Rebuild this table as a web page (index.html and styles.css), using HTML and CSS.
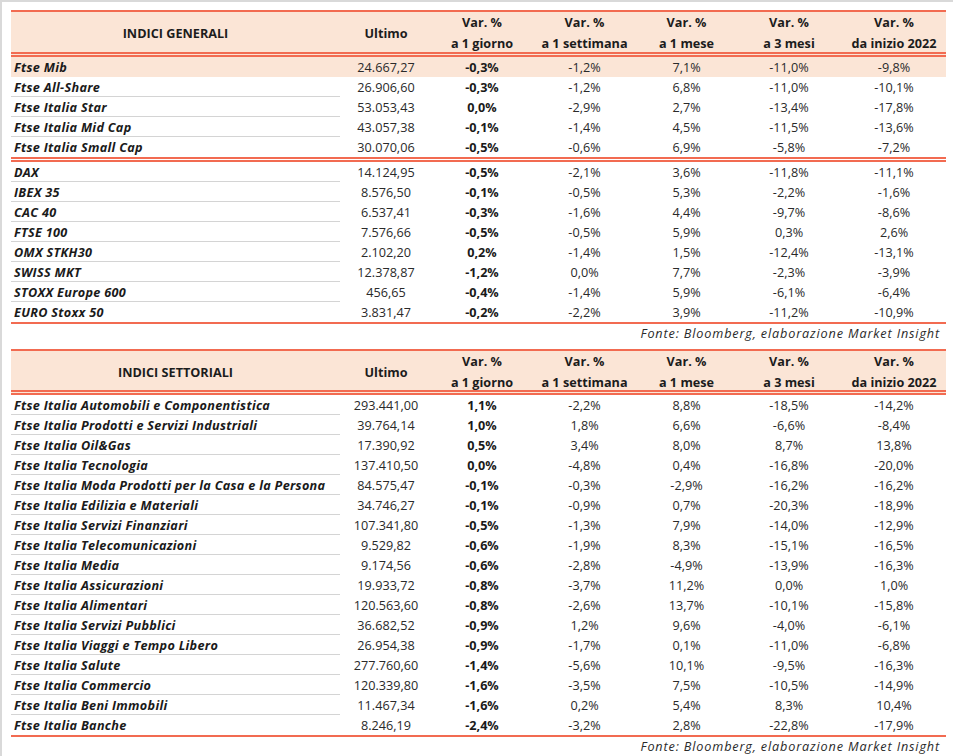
FILE: index.html
```html
<!DOCTYPE html>
<html lang="it">
<head>
<meta charset="utf-8">
<title>Indici</title>
<link rel="stylesheet" href="styles.css">
</head>
<body>
<div class="page">
  <section class="block">
    <div class="sheet">
      <div class="row head">
        <div class="cell title">INDICI GENERALI</div>
        <div class="cell">Ultimo</div>
        <div class="cell stack"><span>Var. %</span><span>a 1 giorno</span></div>
        <div class="cell stack"><span>Var. %</span><span>a 1 settimana</span></div>
        <div class="cell stack"><span>Var. %</span><span>a 1 mese</span></div>
        <div class="cell stack"><span>Var. %</span><span>a 3 mesi</span></div>
        <div class="cell stack"><span>Var. %</span><span>da inizio 2022</span></div>
      </div>
      <div class="row hl"><div class="cell name">Ftse Mib</div><div class="cell">24.667,27</div><div class="cell day">-0,3%</div><div class="cell">-1,2%</div><div class="cell">7,1%</div><div class="cell">-11,0%</div><div class="cell">-9,8%</div></div>
      <div class="row"><div class="cell name">Ftse All-Share</div><div class="cell">26.906,60</div><div class="cell day">-0,3%</div><div class="cell">-1,2%</div><div class="cell">6,8%</div><div class="cell">-11,0%</div><div class="cell">-10,1%</div></div>
      <div class="row"><div class="cell name">Ftse Italia Star</div><div class="cell">53.053,43</div><div class="cell day">0,0%</div><div class="cell">-2,9%</div><div class="cell">2,7%</div><div class="cell">-13,4%</div><div class="cell">-17,8%</div></div>
      <div class="row"><div class="cell name">Ftse Italia Mid Cap</div><div class="cell">43.057,38</div><div class="cell day">-0,1%</div><div class="cell">-1,4%</div><div class="cell">4,5%</div><div class="cell">-11,5%</div><div class="cell">-13,6%</div></div>
      <div class="row group-end"><div class="cell name">Ftse Italia Small Cap</div><div class="cell">30.070,06</div><div class="cell day">-0,5%</div><div class="cell">-0,6%</div><div class="cell">6,9%</div><div class="cell">-5,8%</div><div class="cell">-7,2%</div></div>
      <div class="row"><div class="cell name">DAX</div><div class="cell">14.124,95</div><div class="cell day">-0,5%</div><div class="cell">-2,1%</div><div class="cell">3,6%</div><div class="cell">-11,8%</div><div class="cell">-11,1%</div></div>
      <div class="row"><div class="cell name">IBEX 35</div><div class="cell">8.576,50</div><div class="cell day">-0,1%</div><div class="cell">-0,5%</div><div class="cell">5,3%</div><div class="cell">-2,2%</div><div class="cell">-1,6%</div></div>
      <div class="row"><div class="cell name">CAC 40</div><div class="cell">6.537,41</div><div class="cell day">-0,3%</div><div class="cell">-1,6%</div><div class="cell">4,4%</div><div class="cell">-9,7%</div><div class="cell">-8,6%</div></div>
      <div class="row"><div class="cell name">FTSE 100</div><div class="cell">7.576,66</div><div class="cell day">-0,5%</div><div class="cell">-0,5%</div><div class="cell">5,9%</div><div class="cell">0,3%</div><div class="cell">2,6%</div></div>
      <div class="row"><div class="cell name">OMX STKH30</div><div class="cell">2.102,20</div><div class="cell day">0,2%</div><div class="cell">-1,4%</div><div class="cell">1,5%</div><div class="cell">-12,4%</div><div class="cell">-13,1%</div></div>
      <div class="row"><div class="cell name">SWISS MKT</div><div class="cell">12.378,87</div><div class="cell day">-1,2%</div><div class="cell">0,0%</div><div class="cell">7,7%</div><div class="cell">-2,3%</div><div class="cell">-3,9%</div></div>
      <div class="row"><div class="cell name">STOXX Europe 600</div><div class="cell">456,65</div><div class="cell day">-0,4%</div><div class="cell">-1,4%</div><div class="cell">5,9%</div><div class="cell">-6,1%</div><div class="cell">-6,4%</div></div>
      <div class="row last"><div class="cell name">EURO Stoxx 50</div><div class="cell">3.831,47</div><div class="cell day">-0,2%</div><div class="cell">-2,2%</div><div class="cell">3,9%</div><div class="cell">-11,2%</div><div class="cell">-10,9%</div></div>
    </div>
    <p class="source">Fonte: Bloomberg, elaborazione Market Insight</p>
  </section>

  <section class="block second">
    <div class="sheet">
      <div class="row head">
        <div class="cell title">INDICI SETTORIALI</div>
        <div class="cell">Ultimo</div>
        <div class="cell stack"><span>Var. %</span><span>a 1 giorno</span></div>
        <div class="cell stack"><span>Var. %</span><span>a 1 settimana</span></div>
        <div class="cell stack"><span>Var. %</span><span>a 1 mese</span></div>
        <div class="cell stack"><span>Var. %</span><span>a 3 mesi</span></div>
        <div class="cell stack"><span>Var. %</span><span>da inizio 2022</span></div>
      </div>
      <div class="row"><div class="cell name">Ftse Italia Automobili e Componentistica</div><div class="cell">293.441,00</div><div class="cell day">1,1%</div><div class="cell">-2,2%</div><div class="cell">8,8%</div><div class="cell">-18,5%</div><div class="cell">-14,2%</div></div>
      <div class="row"><div class="cell name">Ftse Italia Prodotti e Servizi Industriali</div><div class="cell">39.764,14</div><div class="cell day">1,0%</div><div class="cell">1,8%</div><div class="cell">6,6%</div><div class="cell">-6,6%</div><div class="cell">-8,4%</div></div>
      <div class="row"><div class="cell name">Ftse Italia Oil&amp;Gas</div><div class="cell">17.390,92</div><div class="cell day">0,5%</div><div class="cell">3,4%</div><div class="cell">8,0%</div><div class="cell">8,7%</div><div class="cell">13,8%</div></div>
      <div class="row"><div class="cell name">Ftse Italia Tecnologia</div><div class="cell">137.410,50</div><div class="cell day">0,0%</div><div class="cell">-4,8%</div><div class="cell">0,4%</div><div class="cell">-16,8%</div><div class="cell">-20,0%</div></div>
      <div class="row"><div class="cell name">Ftse Italia Moda Prodotti per la Casa e la Persona</div><div class="cell">84.575,47</div><div class="cell day">-0,1%</div><div class="cell">-0,3%</div><div class="cell">-2,9%</div><div class="cell">-16,2%</div><div class="cell">-16,2%</div></div>
      <div class="row"><div class="cell name">Ftse Italia Edilizia e Materiali</div><div class="cell">34.746,27</div><div class="cell day">-0,1%</div><div class="cell">-0,9%</div><div class="cell">0,7%</div><div class="cell">-20,3%</div><div class="cell">-18,9%</div></div>
      <div class="row"><div class="cell name">Ftse Italia Servizi Finanziari</div><div class="cell">107.341,80</div><div class="cell day">-0,5%</div><div class="cell">-1,3%</div><div class="cell">7,9%</div><div class="cell">-14,0%</div><div class="cell">-12,9%</div></div>
      <div class="row"><div class="cell name">Ftse Italia Telecomunicazioni</div><div class="cell">9.529,82</div><div class="cell day">-0,6%</div><div class="cell">-1,9%</div><div class="cell">8,3%</div><div class="cell">-15,1%</div><div class="cell">-16,5%</div></div>
      <div class="row"><div class="cell name">Ftse Italia Media</div><div class="cell">9.174,56</div><div class="cell day">-0,6%</div><div class="cell">-2,8%</div><div class="cell">-4,9%</div><div class="cell">-13,9%</div><div class="cell">-16,3%</div></div>
      <div class="row"><div class="cell name">Ftse Italia Assicurazioni</div><div class="cell">19.933,72</div><div class="cell day">-0,8%</div><div class="cell">-3,7%</div><div class="cell">11,2%</div><div class="cell">0,0%</div><div class="cell">1,0%</div></div>
      <div class="row"><div class="cell name">Ftse Italia Alimentari</div><div class="cell">120.563,60</div><div class="cell day">-0,8%</div><div class="cell">-2,6%</div><div class="cell">13,7%</div><div class="cell">-10,1%</div><div class="cell">-15,8%</div></div>
      <div class="row"><div class="cell name">Ftse Italia Servizi Pubblici</div><div class="cell">36.682,52</div><div class="cell day">-0,9%</div><div class="cell">1,2%</div><div class="cell">9,6%</div><div class="cell">-4,0%</div><div class="cell">-6,1%</div></div>
      <div class="row"><div class="cell name">Ftse Italia Viaggi e Tempo Libero</div><div class="cell">26.954,38</div><div class="cell day">-0,9%</div><div class="cell">-1,7%</div><div class="cell">0,1%</div><div class="cell">-11,0%</div><div class="cell">-6,8%</div></div>
      <div class="row"><div class="cell name">Ftse Italia Salute</div><div class="cell">277.760,60</div><div class="cell day">-1,4%</div><div class="cell">-5,6%</div><div class="cell">10,1%</div><div class="cell">-9,5%</div><div class="cell">-16,3%</div></div>
      <div class="row"><div class="cell name">Ftse Italia Commercio</div><div class="cell">120.339,80</div><div class="cell day">-1,6%</div><div class="cell">-3,5%</div><div class="cell">7,5%</div><div class="cell">-10,5%</div><div class="cell">-14,9%</div></div>
      <div class="row"><div class="cell name">Ftse Italia Beni Immobili</div><div class="cell">11.467,34</div><div class="cell day">-1,6%</div><div class="cell">0,2%</div><div class="cell">5,4%</div><div class="cell">8,3%</div><div class="cell">10,4%</div></div>
      <div class="row last"><div class="cell name">Ftse Italia Banche</div><div class="cell">8.246,19</div><div class="cell day">-2,4%</div><div class="cell">-3,2%</div><div class="cell">2,8%</div><div class="cell">-22,8%</div><div class="cell">-17,9%</div></div>
    </div>
    <p class="source">Fonte: Bloomberg, elaborazione Market Insight</p>
  </section>
</div>
</body>
</html>
```
FILE: styles.css
```css
html, body {
  margin: 0;
  padding: 0;
  background: #ffffff;
}

body {
  font-family: "Open Sans", Lato, "DejaVu Sans", sans-serif;
  font-size: 12.67px;
  color: #2a2a2a;
}

.page {
  box-sizing: border-box;
  height: 756px;
  border-top: 2px solid #d9d9d9;
  border-left: 2px solid #d9d9d9;
  padding: 8px 0 0 9px;
}

.block {
  width: 935px;
}

.second {
  margin-top: 5px;
}

.sheet {
  border-top: 2px solid #f26b51;
  border-bottom: 2px solid #f26b51;
}

.row {
  display: grid;
  grid-template-columns: 329px 92px 100px 105px 99px 106px 104px;
  height: 20px;
}

.cell {
  box-sizing: border-box;
  display: flex;
  align-items: center;
  justify-content: center;
  white-space: nowrap;
}

.head {
  height: 40px;
  background: #fbe5d6;
  border-bottom: 5px double #f26b51;
  font-weight: 700;
  color: #1c1c1c;
}

.second .head {
  height: 39px;
}

.second .head .cell {
  padding-bottom: 2px;
}

.stack {
  flex-direction: column;
  line-height: 21px;
}

.name {
  justify-content: flex-start;
  padding-left: 3px;
  font-weight: 700;
  font-style: italic;
  letter-spacing: 0.3px;
  color: #1a1a1a;
  border-bottom: 1px solid #d4d4d4;
}

.day {
  font-weight: 700;
  color: #1a1a1a;
}

.hl {
  background: #fbe5d6;
}

.hl .name,
.last .name {
  border-bottom: none;
}

.group-end {
  border-bottom: 5px double #f26b51;
}

.group-end .name {
  border-bottom: none;
}

.source {
  margin: 0;
  height: 20px;
  line-height: 18px;
  text-align: right;
  padding-right: 6px;
  font-style: italic;
  letter-spacing: 0.85px;
  color: #2a2a2a;
}
```
